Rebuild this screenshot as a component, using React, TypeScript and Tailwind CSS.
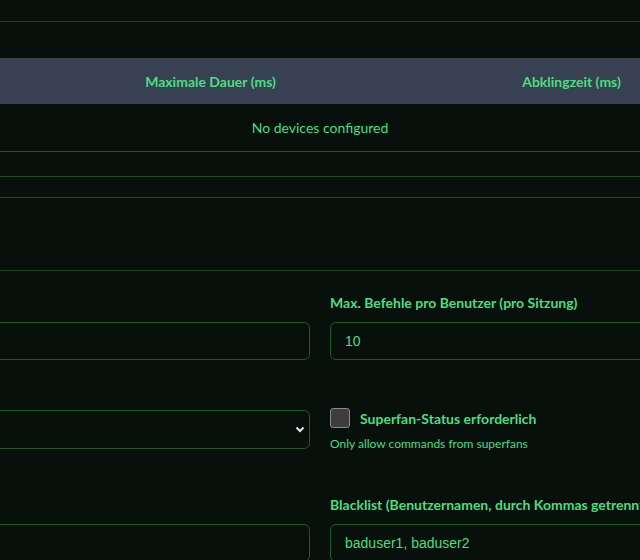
import React from "react";

const green = "text-[#4ade80]";

function Field({ label, value }: { label: string; value: string }) {
  return (
    <div>
      <label className={`block h-5 leading-5 text-[14px] font-bold mt-[2px] mb-[9px] ${green}`}>{label}</label>
      <input
        readOnly
        value={value}
        className={`w-full h-[38px] px-[14px] rounded-md border border-[#1b5a28] bg-transparent text-[14px] outline-none ${green}`}
        style={{ fontFamily: '"Liberation Sans", Arial, sans-serif' }}
      />
    </div>
  );
}

export default function App() {
  return (
    <div
      className="w-[640px] h-[560px] overflow-hidden bg-[#07100a]"
      style={{ fontFamily: 'Lato, "Noto Sans", sans-serif' }}
    >
      {/* previous section */}
      <div className="h-[22px] border-b border-[#1a4322]" />

      {/* devices table */}
      <div className="mt-[36px] w-[1300px] -ml-[330px]">
        <div className="grid grid-cols-[360px_361px_361px_218px] h-[46px] items-center bg-[#374151]">
          <div className={`text-center text-[14px] font-bold ${green}`}>Gerät</div>
          <div className={`text-center text-[14px] font-bold ${green}`}>Maximale Dauer (ms)</div>
          <div className={`text-center text-[14px] font-bold ${green}`}>Abklingzeit (ms)</div>
          <div className={`text-center text-[14px] font-bold ${green}`}>Aktionen</div>
        </div>
        <div className={`h-[48px] flex items-center justify-center border-b border-[#3a4150] text-[14px] ${green}`}>
          No devices configured
        </div>
      </div>
      <div className="h-[25px] border-b border-[#1a4d22]" />
      <div className="h-[21px] border-b border-[#1a4d22]" />
      <div className="h-[73px] border-b border-[#1a4322]" />

      {/* settings form */}
      <div className="w-[1300px] -ml-[330px] pt-5">
        <div className="grid grid-cols-[640px_640px] gap-5">
          <Field label="Cooldown" value="" />
          <Field label="Max. Befehle pro Benutzer (pro Sitzung)" value="10" />
        </div>

        <div className="grid grid-cols-[640px_640px] gap-5 mt-5">
          <div>
            <div className="h-5 mb-[10px]" />
            <div className="relative">
              <select className="appearance-none w-full h-[39px] rounded-md border border-[#1b5a28] bg-transparent outline-none" />
              <svg
                className="absolute right-[5px] top-[16px]"
                width="10"
                height="7"
                viewBox="0 0 10 7"
                fill="none"
              >
                <path d="M1.5 1.5 L5 5 L8.5 1.5" stroke="#e5e7eb" strokeWidth="2" />
              </svg>
            </div>
          </div>
          <div className="pt-[28px]">
            <div className="flex items-center h-5 gap-[10px]">
              <span className="w-5 h-5 rounded-[3px] bg-[#3d3d3d] border border-[#8a8a8a]" />
              <span className={`text-[14px] font-bold ${green}`}>Superfan-Status erforderlich</span>
            </div>
            <p className={`mt-[8px] text-[12px] leading-4 ${green}`}>Only allow commands from superfans</p>
          </div>
        </div>

        <div className="grid grid-cols-[640px_640px] gap-5 mt-[41px]">
          <Field label="Whitelist" value="" />
          <Field label="Blacklist (Benutzernamen, durch Kommas getrennt)" value="baduser1, baduser2" />
        </div>
      </div>
    </div>
  );
}
